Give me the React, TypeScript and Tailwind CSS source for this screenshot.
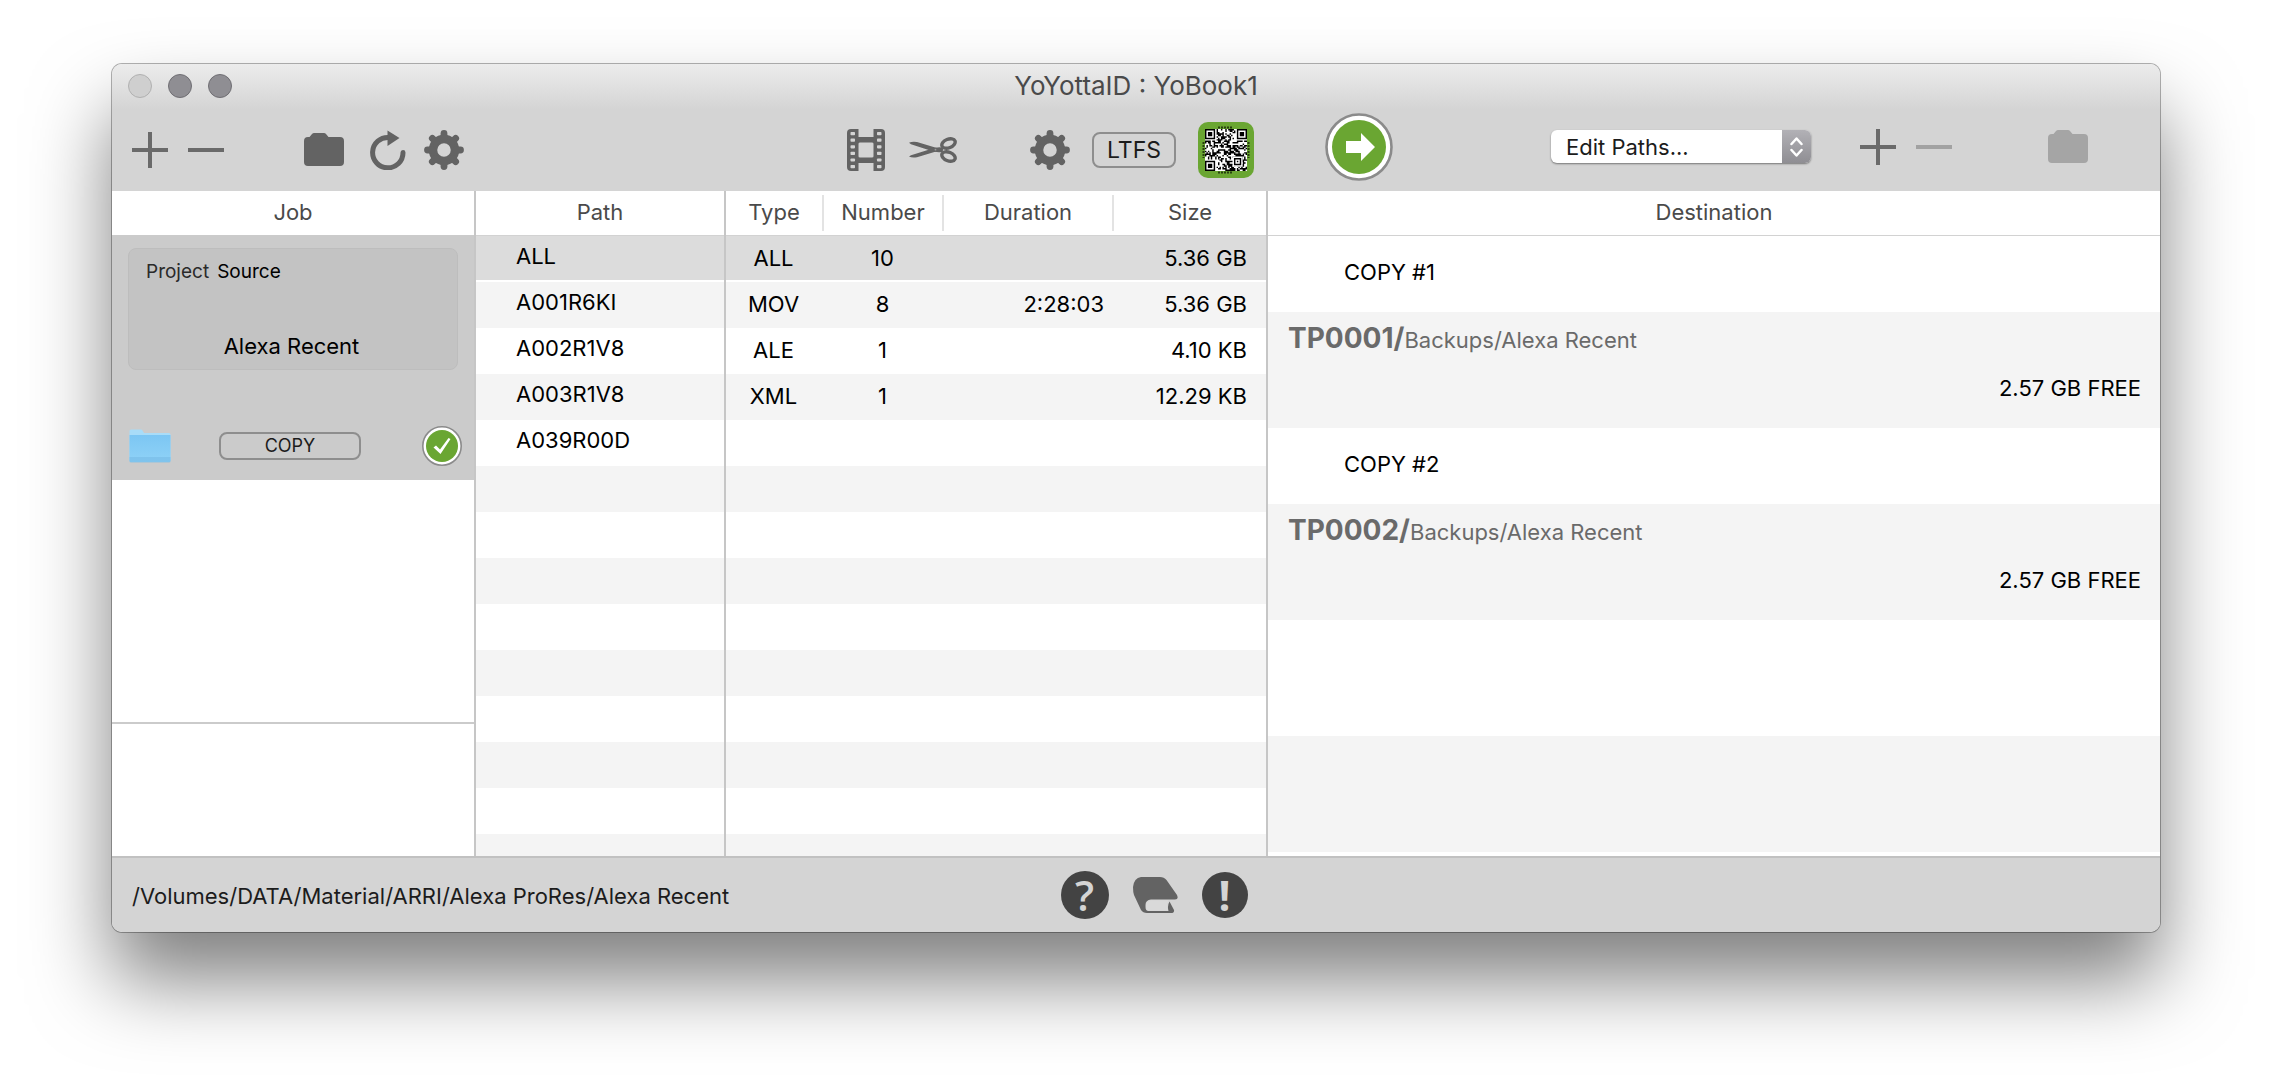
import React from "react";

function Gear() {
  return (
    <svg width="40" height="40" viewBox="0 0 40 40" fill="none" stroke="#636363" aria-hidden="true">
      <circle cx="20" cy="20" r="11" strokeWidth="8.5" />
      {[0, 45, 90, 135, 180, 225, 270, 315].map((angle) => (
        <path
          key={angle}
          d="M20 8V3.5"
          strokeWidth="6.8"
          strokeLinecap="round"
          transform={`rotate(${angle} 20 20)`}
        />
      ))}
    </svg>
  );
}

function Plus() {
  return (
    <svg width="36" height="36" viewBox="0 0 36 36" fill="#6a6a6a" aria-hidden="true">
      <path d="M16 0h4v16h16v4H20v16h-4V20H0v-4h16z" />
    </svg>
  );
}

function Minus({ className }: { className: string }) {
  return (
    <svg width="36" height="36" viewBox="0 0 36 36" className={className} aria-hidden="true">
      <path d="M0 16h36v4H0z" />
    </svg>
  );
}

function Folder({ className }: { className: string }) {
  return (
    <svg width="40" height="33" viewBox="0 0 40 33" className={className} aria-hidden="true">
      <path d="M4 4h1.5L8 1Q9 0 10 0h10q1.2 0 2 1l2.500 3H36q4 0 4 4v21q0 4-4 4H4q-4 0-4-4V8q0-4 4-4z" />
    </svg>
  );
}

function Refresh() {
  return (
    <svg width="36" height="40" viewBox="0 0 36 40" aria-hidden="true">
      <path
        d="M19 7.500A15.200 15.200 0 1 0 33 22.500"
        fill="none"
        stroke="#636363"
        strokeWidth="5"
        strokeLinecap="round"
      />
      <path d="M17.500 0.500L29.500 8L17.500 16z" fill="#636363" />
    </svg>
  );
}

const FILM_HOLES = [0, 1, 2, 3, 4, 5];

function Film() {
  return (
    <svg width="38" height="42" viewBox="0 0 38 42" aria-hidden="true">
      <g fill="#636363">
        <path d="M4 0h7.500v42H4q-4 0-4-4V4q0-4 4-4z" />
        <path d="M26.500 0H34q4 0 4 4v34q0 4-4 4h-7.500z" />
        <path d="M11 8h16v5.500H11zM11 28.500h16V34H11z" />
        <path d="M11 13h2.500q-2.500 0-2.500 2.500zM27 13h-2.500q2.500 0 2.500 2.500zM11 29h2.500q-2.500 0-2.500-2.500zM27 29h-2.500q2.500 0 2.500-2.500z" />
      </g>
      <g fill="#d4d4d4">
        {FILM_HOLES.map((i) => (
          <React.Fragment key={i}>
            <rect x="3.500" y={3 + i * 6.6} width="4.500" height="3.200" rx="0.800" />
            <rect x="30" y={3 + i * 6.6} width="4.500" height="3.200" rx="0.800" />
          </React.Fragment>
        ))}
      </g>
    </svg>
  );
}

function Scissors() {
  return (
    <svg width="48" height="26" viewBox="0 0 48 26" aria-hidden="true">
      <g fill="#636363">
        <path d="M0 5.800Q3 4.200 8 5L27 10.800Q31 12 34 11.500L33.500 15Q27 15.800 22 13.800L2 7.200z" />
        <path d="M0 19.500Q3 21.200 8 20.200L27 14.600Q31 13.200 34 13.800L33.500 10.500Q27 9.800 22 12L2 18.200z" />
      </g>
      <g fill="none" stroke="#636363" strokeWidth="3.400">
        <ellipse cx="39.500" cy="6.500" rx="7" ry="4.300" transform="rotate(-22 39.500 6.500)" />
        <ellipse cx="39.500" cy="19.500" rx="7" ry="4.300" transform="rotate(22 39.500 19.500)" />
      </g>
      <circle cx="26.500" cy="12.700" r="0.900" fill="#9a9a9a" />
    </svg>
  );
}

const QR_SIZE = 29;

function inFinder(x: number, y: number) {
  return (x < 8 && y < 8) || (x > QR_SIZE - 9 && y < 8) || (x < 8 && y > QR_SIZE - 9);
}

function qrModules() {
  let seed = 20137;
  let d = "";
  for (let y = 0; y < QR_SIZE; y++) {
    for (let x = 0; x < QR_SIZE; x++) {
      seed = (seed * 1103515245 + 12345) % 2147483648;
      if (!inFinder(x, y) && (seed >> 12) % 100 < 52) d += `M${x} ${y}h1v1h-1z`;
    }
  }
  return d;
}

const QR_PATH = qrModules();

function QrCode() {
  return (
    <svg width="56" height="56" viewBox="0 0 56 56" aria-hidden="true">
      <rect width="56" height="56" rx="10" fill="#6aa632" />
      <g stroke="#27400f" strokeWidth="2" strokeDasharray="2 1">
        <path d="M20 5.500h15M20 50.500h15M5.500 20v16M50.500 20v16" />
      </g>
      <rect x="7" y="7" width="42" height="42" fill="#fff" />
      <svg x="7" y="7" width="42" height="42" viewBox="0 0 29 29">
        <path d={QR_PATH} />
        {[
          [0, 0],
          [22, 0],
          [0, 22],
        ].map(([x, y]) => (
          <path
            key={`${x}-${y}`}
            fillRule="evenodd"
            d={`M${x} ${y}h7v7h-7zM${x + 1} ${y + 1}v5h5v-5zM${x + 2} ${y + 2}h3v3h-3z`}
          />
        ))}
        <path d="M19 19h7v7h-7z" fill="#fff" />
        <path fillRule="evenodd" d="M20 20h5v5h-5zM21 21v3h3v-3zM22 22h1v1h-1z" />
      </svg>
    </svg>
  );
}

function StartArrow() {
  return (
    <svg width="68" height="68" viewBox="0 0 68 68" aria-hidden="true">
      <circle cx="34" cy="34" r="32.500" fill="#fff" stroke="#8b8b8b" strokeWidth="2.600" />
      <circle cx="34" cy="34" r="27" fill="#6aa632" />
      <path d="M21 28h15v-8l14 14l-14 14v-8H21z" fill="#fff" />
    </svg>
  );
}

function CheckBadge() {
  return (
    <svg width="40" height="40" viewBox="0 0 40 40" role="img" aria-label="Ready">
      <circle cx="20" cy="20" r="19.200" fill="#fff" stroke="#8b8b8b" strokeWidth="1.600" />
      <circle cx="20" cy="20" r="16" fill="#6aa632" />
      <path d="M11.500 21.500L14 19.500L18 23.500L26.500 12L28.500 13L18.500 28z" fill="#fff" />
    </svg>
  );
}

function BlueFolder() {
  return (
    <svg width="42" height="34" viewBox="0 0 42 34" role="img" aria-label="Folder">
      <defs>
        <linearGradient id="folder-front" x1="0" y1="0" x2="0" y2="1">
          <stop offset="0" stopColor="#7cc6f3" />
          <stop offset="1" stopColor="#8fd2f7" />
        </linearGradient>
      </defs>
      <path d="M0.500 2q0-1.500 1.500-1.500h10q1 0 1.500 1l1.500 2.500h25q1.500 0 1.500 1.500V31H0.500z" fill="#a8dcf8" />
      <path d="M0.500 6h41v25.500q0 1.500-1.500 1.500H2q-1.500 0-1.500-1.500z" fill="url(#folder-front)" />
      <path d="M0.500 28h41v4q0 1.500-1.500 1.500H2q-1.500 0-1.500-1.500z" fill="#79bde8" opacity="0.700" />
    </svg>
  );
}

function DriveIcon() {
  return (
    <svg width="45" height="36" viewBox="0 0 45 36" fill="#636363" aria-hidden="true">
      <path d="M8 0H27Q31 0 33.500 3L44 18Q46 22.500 42 22.500H18Q12.500 23 12.500 28V30Q12.500 34 15.500 34H35.500Q34 29 36.500 24.500L41 33Q41.500 36 38 36H14Q10 36 8 33L1 18Q0 15 0 10Q1 1 8 0z" />
      <path d="M18 23.500H35Q33.500 29 35 33.500H16Q13 33 13 30V28Q13.500 24 18 23.500z" fill="#d9d9d9" />
    </svg>
  );
}

const PATHS = ["ALL", "A001R6KI", "A002R1V8", "A003R1V8", "A039R00D"];

const FILES = [
  { type: "ALL", number: "10", duration: "", size: "5.36 GB" },
  { type: "MOV", number: "8", duration: "2:28:03", size: "5.36 GB" },
  { type: "ALE", number: "1", duration: "", size: "4.10 KB" },
  { type: "XML", number: "1", duration: "", size: "12.29 KB" },
];

const COPIES = [
  { title: "COPY #1", volume: "TP0001/", folder: "Backups/Alexa Recent", free: "2.57 GB FREE" },
  { title: "COPY #2", volume: "TP0002/", folder: "Backups/Alexa Recent", free: "2.57 GB FREE" },
];

const STRIPES =
  "bg-[repeating-linear-gradient(to_bottom,#fff_0px,#fff_46px,#f4f4f4_46px,#f4f4f4_92px)]";

function TitleBar() {
  return (
    <header className="flex h-[46px] items-center bg-linear-to-b from-[#ececec] to-[#d4d4d4] px-4 pb-0.5">
      <div className="flex flex-1 gap-4">
        <button aria-label="Close" className="size-6 rounded-full border border-[#b0b0b0] bg-[#cfcfcf]" />
        <button aria-label="Minimize" className="size-6 rounded-full border border-[#6f6e73] bg-[#8f8e93]" />
        <button aria-label="Zoom" className="size-6 rounded-full border border-[#6f6e73] bg-[#8f8e93]" />
      </div>
      <h1 className="text-[26px] leading-8 text-[#4a4a4a]">YoYottaID : YoBook1</h1>
      <div className="flex-1" />
    </header>
  );
}

function Toolbar() {
  return (
    <div className="flex h-[81px] bg-[#d4d4d4]">
      <div className="flex w-[364px] shrink-0 items-center pb-0.5 pl-5">
        <button aria-label="Add job">
          <Plus />
        </button>
        <button aria-label="Remove job" className="ml-5">
          <Minus className="fill-[#6a6a6a]" />
        </button>
        <button aria-label="Open folder" className="ml-20">
          <Folder className="fill-[#636363]" />
        </button>
        <button aria-label="Reload" className="ml-[26px]">
          <Refresh />
        </button>
        <button aria-label="Job settings" className="ml-[18px]">
          <Gear />
        </button>
      </div>
      <div className="flex w-[792px] shrink-0 items-center pb-0.5 pl-[371px]">
        <button aria-label="Media">
          <Film />
        </button>
        <button aria-label="Trim" className="ml-6">
          <Scissors />
        </button>
        <button aria-label="Settings" className="ml-[73px]">
          <Gear />
        </button>
        <button className="ml-[22px] h-9 w-[84px] rounded-lg border-2 border-[#8e8e8e] text-[23px] leading-8 text-[#1c1c1c]">
          LTFS
        </button>
        <button aria-label="Barcode labels" className="ml-[22px]">
          <QrCode />
        </button>
      </div>
      <div className="flex flex-1 items-center pr-[72px] pb-2">
        <button aria-label="Start" className="ml-[57px]">
          <StartArrow />
        </button>
        <div className="relative ml-[158px] h-[33px] w-[260px] overflow-hidden rounded-md bg-white shadow-[0_1px_2px_rgba(0,0,0,0.45)]">
          <select
            aria-label="Paths"
            className="size-full appearance-none pr-8 pl-[15px] text-[22px] leading-8 text-[#1c1c1c]"
          >
            <option>Edit Paths...</option>
          </select>
          <div className="pointer-events-none absolute inset-y-0 right-0 flex w-[29px] items-center justify-center bg-linear-to-b from-[#b2b1b6] to-[#8f8e93]">
            <svg width="13" height="20" viewBox="0 0 13 20" fill="none" stroke="#fff" strokeWidth="2.500" strokeLinecap="round" strokeLinejoin="round">
              <path d="M1.500 7L6.500 1.500L11.500 7M1.500 13L6.500 18.500L11.500 13" />
            </svg>
          </div>
        </div>
        <button aria-label="Add destination" className="ml-[49px]">
          <Plus />
        </button>
        <button aria-label="Remove destination" className="ml-5" disabled>
          <Minus className="fill-[#a2a2a2]" />
        </button>
        <button aria-label="Open destination" className="ml-auto" disabled>
          <Folder className="fill-[#a5a5a5]" />
        </button>
      </div>
    </div>
  );
}

function JobPanel() {
  return (
    <section className="flex w-[364px] shrink-0 flex-col border-r-2 border-[#c6c6c6]">
      <h2 className="h-11 text-center text-[22px] leading-[42px] text-[#4a4a4a]">Job</h2>
      <div className="flex h-[245px] flex-col bg-[#cbcbcb] px-4 pt-[13px]">
        <div className="flex h-[122px] flex-col justify-between rounded-lg border border-[#bdbdbd] bg-[#c3c3c3] pt-[11px] pr-5 pb-2 pl-[17px]">
          <p className="flex gap-2 text-[19px] leading-6">
            <span className="text-[#2a2a2a]">Project</span>
            <span>Source</span>
          </p>
          <p className="text-center text-[22px] leading-[30px]">Alexa Recent</p>
        </div>
        <div className="-mr-1 mt-14 flex items-center pl-px">
          <BlueFolder />
          <button className="ml-12 h-7 w-[142px] rounded-lg border-2 border-[#8e8e8e] text-[18px] leading-6 text-[#1c1c1c]">
            COPY
          </button>
          <div className="ml-auto">
            <CheckBadge />
          </div>
        </div>
      </div>
      <div className="flex-1" />
      <div className="h-[134px] border-t-2 border-[#cbcbcb]" />
    </section>
  );
}

function PathPanel() {
  return (
    <section className="flex w-[250px] shrink-0 flex-col border-r-2 border-[#c6c6c6]">
      <h2 className="h-[45px] border-b border-[#d2d2d2] text-center text-[22px] leading-[42px] text-[#4a4a4a]">
        Path
      </h2>
      <ul className={`flex-1 ${STRIPES}`}>
        {PATHS.map((path, i) => (
          <li
            key={path}
            className={`h-[46px] pl-10 leading-10 ${i === 0 ? "border-b-2 border-white bg-[#dcdcdc]" : ""}`}
          >
            {path}
          </li>
        ))}
      </ul>
    </section>
  );
}

function HeaderCell({ label, last }: { label: string; last?: boolean }) {
  return (
    <th className="h-[45px] border-b border-[#d2d2d2] p-0 font-normal text-[#4a4a4a]">
      <div className={`h-9 leading-[34px] ${last ? "" : "border-r-2 border-[#e3e3e3]"}`}>{label}</div>
    </th>
  );
}

function FilePanel() {
  return (
    <section className="flex w-[542px] shrink-0 flex-col border-r-2 border-[#c6c6c6]">
      <table className="w-full table-fixed border-separate border-spacing-0">
        <colgroup>
          <col className="w-[98px]" />
          <col className="w-[120px]" />
          <col className="w-[170px]" />
          <col />
        </colgroup>
        <thead>
          <tr>
            <HeaderCell label="Type" />
            <HeaderCell label="Number" />
            <HeaderCell label="Duration" />
            <HeaderCell label="Size" last />
          </tr>
        </thead>
        <tbody>
          {FILES.map((file, i) => {
            const cell =
              i === 0
                ? "h-[46px] border-b-2 border-white bg-[#dcdcdc]"
                : i % 2
                  ? "h-[46px] bg-[#f4f4f4] pb-0.5"
                  : "h-[46px] pb-0.5";
            return (
              <tr key={file.type}>
                <td className={`${cell} pr-[3px] text-center`}>{file.type}</td>
                <td className={`${cell} pr-[3px] text-center`}>{file.number}</td>
                <td className={`${cell} pr-[10px] text-right`}>{file.duration}</td>
                <td className={`${cell} pr-[19px] text-right`}>{file.size}</td>
              </tr>
            );
          })}
        </tbody>
      </table>
      <div className={`flex-1 ${STRIPES}`} />
    </section>
  );
}

function DestinationPanel() {
  return (
    <section className="min-w-0 flex-1 pb-1">
      <h2 className="h-[45px] border-b border-[#d2d2d2] text-center text-[22px] leading-[42px] text-[#4a4a4a]">
        Destination
      </h2>
      {COPIES.map((copy) => (
        <article key={copy.title}>
          <h3 className="h-[76px] pl-[76px] leading-[72px]">{copy.title}</h3>
          <div className="h-[116px] bg-[#f4f4f4] pt-2 pr-[19px] pl-5">
            <p className="leading-9 text-[#6a6a6a]">
              <b className="text-[28px]">{copy.volume}</b>
              {copy.folder}
            </p>
            <p className="mt-3.5 text-right leading-8">{copy.free}</p>
          </div>
        </article>
      ))}
      <div className="h-[116px]" />
      <div className="h-[116px] bg-[#f4f4f4]" />
    </section>
  );
}

function StatusBar() {
  return (
    <footer className="flex h-[76px] items-center border-t-2 border-[#c1c1c1] bg-[#d4d4d4] px-5">
      <p className="flex-1 pt-0.5 text-[#1c1c1c]">/Volumes/DATA/Material/ARRI/Alexa ProRes/Alexa Recent</p>
      <div className="flex items-center gap-6 pl-9">
        <button
          aria-label="Help"
          className="size-12 rounded-full bg-[#434343] font-['Open_Sans'] text-[42px] leading-[48px] font-semibold text-[#d4d4d4]"
        >
          ?
        </button>
        <button aria-label="Drives">
          <DriveIcon />
        </button>
        <button
          aria-label="Alerts"
          className="size-[46px] rounded-full bg-[#434343] font-['Open_Sans'] text-[42px] leading-[46px] font-bold text-[#d4d4d4]"
        >
          !
        </button>
      </div>
      <div className="flex-1" />
    </footer>
  );
}

export default function App() {
  return (
    <div className="min-h-screen bg-white px-28 pt-16 pb-40 font-['Inter',sans-serif] text-[22px] text-black">
      <main className="overflow-hidden rounded-[10px] bg-white shadow-[0_0_0_1px_rgba(0,0,0,0.3),0_48px_80px_rgba(0,0,0,0.5)]">
        <TitleBar />
        <Toolbar />
        <div className="flex">
          <JobPanel />
          <PathPanel />
          <FilePanel />
          <DestinationPanel />
        </div>
        <StatusBar />
      </main>
    </div>
  );
}
